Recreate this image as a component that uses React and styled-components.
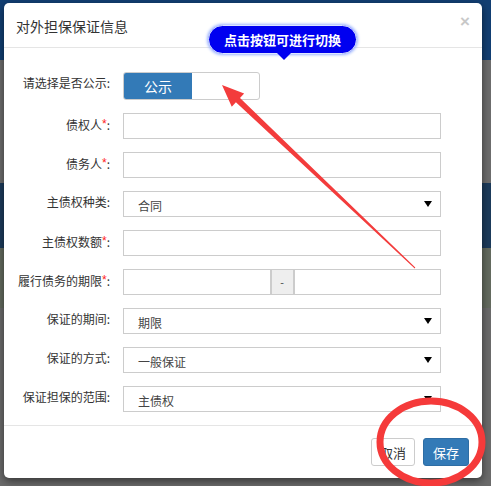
import React from 'react'
import styled, { createGlobalStyle } from 'styled-components'

const GlobalStyle = createGlobalStyle`
  html, body {
    margin: 0;
    padding: 0;
  }
  body {
    width: 491px;
    height: 486px;
    overflow: hidden;
    font-family: "Noto Sans CJK SC", "Liberation Sans", sans-serif;
    font-size: 12px;
    color: #333;
    background: linear-gradient(
      to bottom,
      #123f73 0px,
      #123f73 60px,
      #6d6d6d 60px,
      #6d6d6d 183px,
      #1c3b5b 183px,
      #1c3b5b 248px,
      #646b5f 248px,
      #646b5f 308px,
      #6b6b6b 308px
    );
  }
`

const fields = [
  { label: '债权人', required: true, kind: 'input' },
  { label: '债务人', required: true, kind: 'input' },
  { label: '主债权种类', kind: 'select', value: '合同' },
  { label: '主债权数额', required: true, kind: 'input' },
  { label: '履行债务的期限', required: true, kind: 'range' },
  { label: '保证的期间', kind: 'select', value: '期限' },
  { label: '保证的方式', kind: 'select', value: '一般保证' },
  { label: '保证担保的范围', kind: 'select', value: '主债权' },
]

function Field({ kind, value }) {
  if (kind === 'select') {
    return (
      <Select>
        <span>{value}</span>
        <Caret />
      </Select>
    )
  }
  if (kind === 'range') {
    return (
      <Range>
        <Input />
        <Addon>-</Addon>
        <Input />
      </Range>
    )
  }
  return <Input />
}

export default function App() {
  return (
    <>
      <GlobalStyle />
      <Modal>
        <Header>
          <Title>对外担保保证信息</Title>
          <Close>×</Close>
        </Header>

        <Body>
          <Label>请选择是否公示:</Label>
          <Toggle>
            <ToggleOn>公示</ToggleOn>
          </Toggle>

          {fields.map((f) => (
            <React.Fragment key={f.label}>
              <Label>
                {f.label}
                {f.required ? <Star>*</Star> : null}:
              </Label>
              <Field kind={f.kind} value={f.value} />
            </React.Fragment>
          ))}
        </Body>

        <Footer>
          <Button>取消</Button>
          <Button $primary>保存</Button>
        </Footer>

        <Tip>点击按钮可进行切换</Tip>
      </Modal>

      <Marks width="491" height="486" viewBox="0 0 491 486">
        <polygon
          points="415.3,267.6 240.0,97.96 244.15,93.61 222,85 231.77,106.67 235.9,102.3 414.7,268.4"
          fill="#f33c3c"
        />
        <ellipse cx="431" cy="442" rx="51" ry="41" fill="none" stroke="#f53a3a" strokeWidth="7" />
      </Marks>
    </>
  )
}

const Modal = styled.div`
  position: relative;
  width: 478px;
  height: 475px;
  margin: 3px 0 0 4px;
  background: #fff;
  border-radius: 5px;
  box-shadow: 0 3px 9px rgba(0, 0, 0, 0.5);
  display: flex;
  flex-direction: column;
`

const Header = styled.div`
  height: 44px;
  padding: 0 12px;
  display: flex;
  align-items: center;
  justify-content: space-between;
  border-bottom: 1px solid #e5e5e5;
`

const Title = styled.div`
  font-size: 14px;
  color: #333;
  padding-top: 2px;
`

const Close = styled.div`
  font-family: "Liberation Sans", sans-serif;
  font-size: 17px;
  font-weight: bold;
  color: #c8c8c8;
  margin-top: -6px;
`

const Body = styled.div`
  flex: 1;
  padding: 24px 0 0 0;
  display: grid;
  grid-template-columns: 106px 318px;
  grid-auto-rows: 26px;
  grid-template-rows: 28px;
  column-gap: 13px;
  row-gap: 13px;
  align-content: start;
`

const Label = styled.div`
  text-align: right;
  font-size: 12px;
  line-height: 16px;
  padding-top: 3px;
  color: #333;
  white-space: nowrap;
`

const Star = styled.span`
  color: #f22;
  font-family: "Liberation Sans", sans-serif;
  font-size: 12px;
  vertical-align: 2px;
`

const Toggle = styled.div`
  width: 137px;
  height: 28px;
  box-sizing: border-box;
  border: 1px solid #ccc;
  border-radius: 3px;
  display: flex;
  overflow: hidden;
`

const ToggleOn = styled.div`
  width: 68px;
  background: #337ab7;
  color: #fff;
  font-size: 14px;
  display: flex;
  align-items: center;
  justify-content: center;
`

const Input = styled.div`
  flex: 1;
  height: 26px;
  box-sizing: border-box;
  border: 1px solid #ccc;
  background: #fff;
`

const Select = styled.div`
  height: 26px;
  box-sizing: border-box;
  border: 1px solid #ccc;
  padding: 2px 8px 0 14px;
  display: flex;
  align-items: center;
  justify-content: space-between;
  font-size: 12px;
  color: #444;
`

const Caret = styled.span`
  width: 0;
  height: 0;
  border-left: 4px solid transparent;
  border-right: 4px solid transparent;
  border-top: 6px solid #000;
  margin-top: -2px;
`

const Range = styled.div`
  display: flex;
`

const Addon = styled.div`
  width: 25px;
  height: 26px;
  box-sizing: border-box;
  background: #eee;
  border: 1px solid #ccc;
  border-left-width: 2px;
  border-right-width: 2px;
  margin: 0 -1px;
  font-family: "Liberation Sans", sans-serif;
  font-size: 11px;
  color: #555;
  display: flex;
  align-items: center;
  justify-content: center;
`

const Footer = styled.div`
  height: 53px;
  box-sizing: border-box;
  border-top: 1px solid #e5e5e5;
  padding: 12px 13px 0 0;
  display: flex;
  justify-content: flex-end;
  gap: 8px;
`

const Button = styled.div`
  height: 28px;
  padding: 0 ${(p) => (p.$primary ? '9px' : '8px')};
  box-sizing: border-box;
  border-radius: 3px;
  border: 1px solid ${(p) => (p.$primary ? '#2e6da4' : '#ccc')};
  background: ${(p) => (p.$primary ? '#337ab7' : '#fff')};
  color: ${(p) => (p.$primary ? '#fff' : '#333')};
  font-size: 13px;
  display: flex;
  align-items: center;
`

const Tip = styled.div`
  position: absolute;
  left: 204px;
  top: 22px;
  width: 149px;
  height: 29px;
  box-sizing: border-box;
  border-radius: 15px;
  background: #0000f0;
  border: 1px solid #dfe6ff;
  box-shadow: 0 0 3px 1px #9bb4ff;
  color: #fff;
  font-size: 13px;
  font-weight: bold;
  display: flex;
  align-items: center;
  justify-content: center;

  &::after {
    content: '';
    position: absolute;
    left: 68px;
    bottom: -7px;
    border-left: 7px solid transparent;
    border-right: 7px solid transparent;
    border-top: 7px solid #0000f0;
  }
`

const Marks = styled.svg`
  position: absolute;
  left: 0;
  top: 0;
  pointer-events: none;
`
